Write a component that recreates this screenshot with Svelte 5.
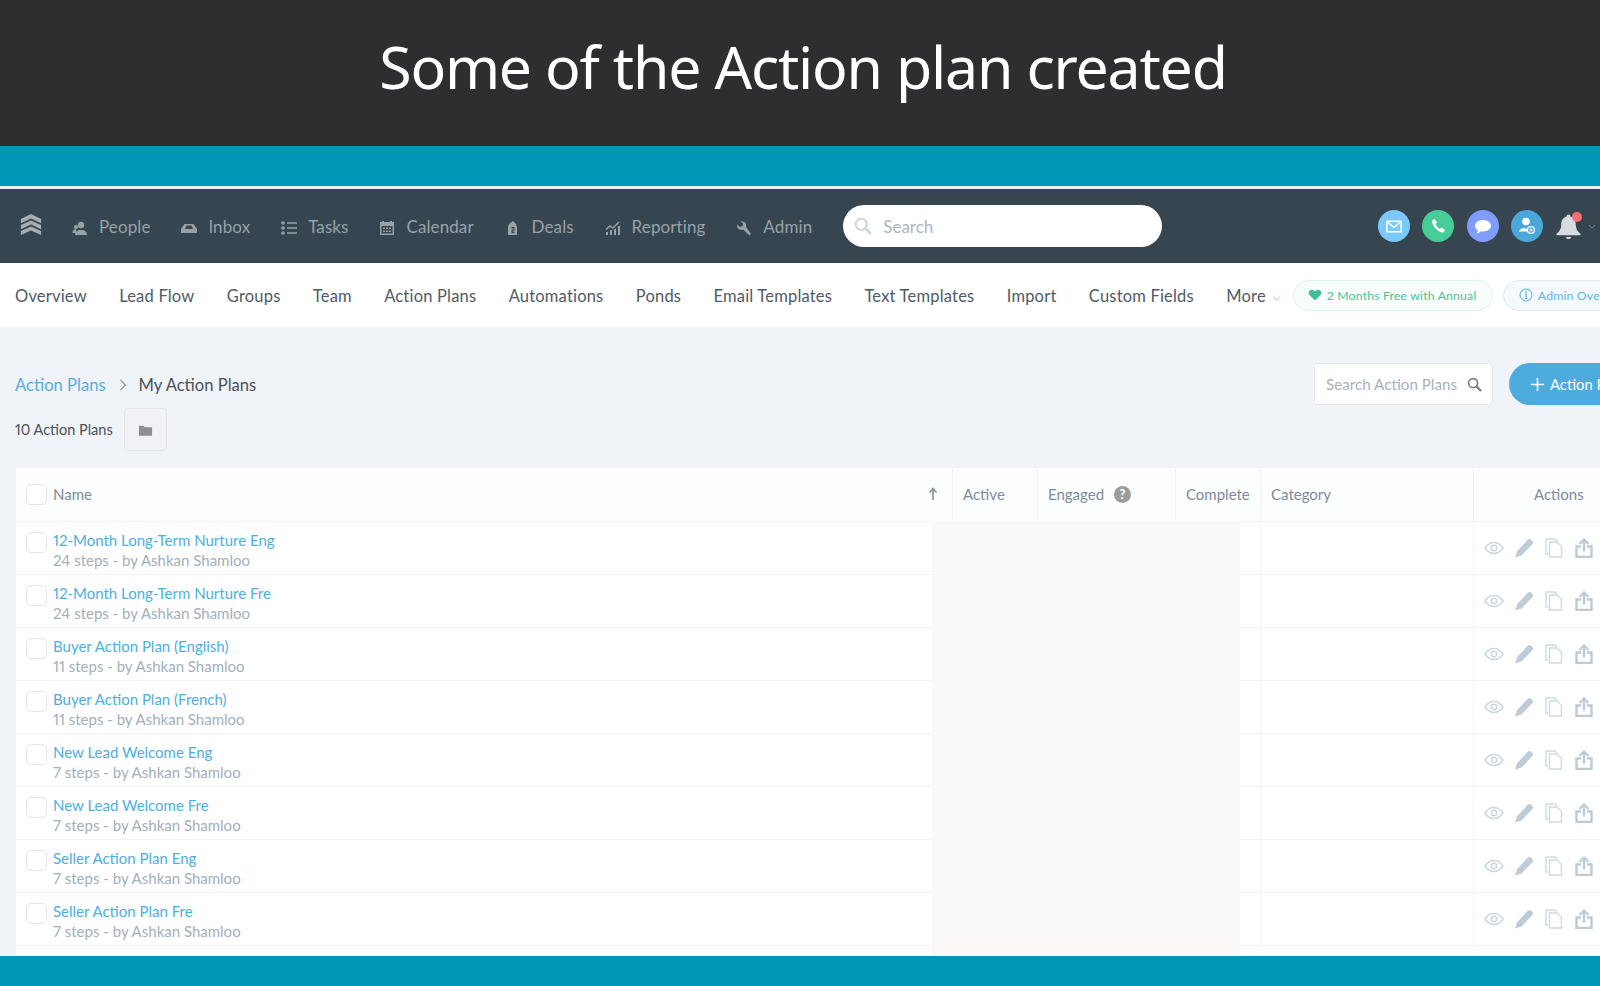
<script>
  const navItems = ['People','Inbox','Tasks','Calendar','Deals','Reporting','Admin'];
  const subItems = ['Overview','Lead Flow','Groups','Team','Action Plans','Automations','Ponds','Email Templates','Text Templates','Import','Custom Fields'];
  const rows = [
    ['12-Month Long-Term Nurture Eng','24 steps - by Ashkan Shamloo'],
    ['12-Month Long-Term Nurture Fre','24 steps - by Ashkan Shamloo'],
    ['Buyer Action Plan (English)','11 steps - by Ashkan Shamloo'],
    ['Buyer Action Plan (French)','11 steps - by Ashkan Shamloo'],
    ['New Lead Welcome Eng','7 steps - by Ashkan Shamloo'],
    ['New Lead Welcome Fre','7 steps - by Ashkan Shamloo'],
    ['Seller Action Plan Eng','7 steps - by Ashkan Shamloo'],
    ['Seller Action Plan Fre','7 steps - by Ashkan Shamloo']
  ];
</script>

<div class="screen">
  <header class="title"><h1>Some of the Action plan created</h1></header>
  <div class="band"></div>
  <div class="rule"></div>

  <nav class="topnav">
    <svg class="logo" viewBox="0 0 24 24"><path d="M12 0 23 5.500V10L12 5 1 10V5.500Z"/><path d="M12 7 23 12V16.500L12 11.500 1 16.500V12Z"/><path d="M12 13.500 23 18.500V23L12 18 1 23V18.500Z"/></svg>
    <div class="navitems">
      {#each navItems as item}
        <div class="navitem">
          <svg class="navicon" viewBox="0 0 16 16">
            {#if item === 'People'}
              <circle cx="9" cy="5" r="3.200"/><path d="M3 15c0-3 2-5 6-5s6 2 6 5Z"/><circle cx="4" cy="7" r="2"/><path d="M0.500 13c0-2.500 1.500-4 3.500-4v4Z"/>
            {:else if item === 'Inbox'}
              <path d="M3.500 4h9L16 9v4H0V9Zm.5 5h8l-1.500-3.500h-5Z" fill-rule="evenodd"/>
            {:else if item === 'Tasks'}
              <circle cx="2" cy="3" r="1.800"/><circle cx="2" cy="8" r="1.800"/><circle cx="2" cy="13" r="1.800"/><path d="M6 2.200h10v1.600H6ZM6 7.200h10v1.600H6ZM6 12.200h10v1.600H6Z"/>
            {:else if item === 'Calendar'}
              <path d="M1 2h2V1h2v1h6V1h2v1h2v13H1ZM2.500 6v7.500h11V6Zm1.500 1.500h2v1.500H4Zm3 0h2v1.500H7Zm3 0h2v1.500h-2ZM4 10.500h2V12H4Zm3 0h2V12H7Zm3 0h2V12h-2Z" fill-rule="evenodd"/>
            {:else if item === 'Deals'}
              <path d="M8 1l3 3 1 3v8H3V7l1-3ZM6.500 7v1.500h2V9.500h-2V13h3v-1.500h-2V10.500h2V7Z" fill-rule="evenodd"/>
            {:else if item === 'Reporting'}
              <path d="M1 12h2v3H1ZM5 10h2v5H5ZM9 9h2v6H9ZM13 6h2v9h-2Z"/><path d="M1 9.500 5 6l3 2 6-6" fill="none" stroke="currentColor" stroke-width="1.400"/>
            {:else}
              <path d="M15 14 13.500 15.500 7 9.500C5 10.300 2.500 9.500 1.500 7.500 1 6.500 1 5.500 1.200 4.500L4 7l2.500-.8.700-2.500L4.500 1.300C6.500.7 9 1.700 9.800 3.500c.5 1.100.5 2.200.1 3.300Z"/>
            {/if}
          </svg>
          <span>{item}</span>
        </div>
      {/each}
    </div>
    <div class="globalsearch">
      <svg viewBox="0 0 16 16"><circle cx="6.500" cy="6.500" r="5" fill="none" stroke="currentColor" stroke-width="1.800"/><path d="M10.500 10.500 15 15" stroke="currentColor" stroke-width="2.400"/></svg>
      <span>Search</span>
    </div>
    <div class="circles">
      <div class="circle mail">
        <svg viewBox="0 0 18 14"><path d="M1 1h16v12H1Z" fill="none" stroke="#fff" stroke-width="1.700"/><path d="M1.500 2 9 8l7.500-6" fill="none" stroke="#fff" stroke-width="1.500"/></svg>
      </div>
      <div class="circle phone">
        <svg viewBox="0 0 16 16"><path d="M4.500 1 2 2.500C1.500 7 8 15 13.500 14.500L15 12l-3.500-2.500-1.800 1.500C8 10 6 7.500 5.500 6L7 4.500Z" fill="#fff"/></svg>
      </div>
      <div class="circle chat">
        <svg viewBox="0 0 18 15"><path d="M9 1c4.500 0 8 2.500 8 5.800s-3.500 5.700-8 5.700c-.8 0-1.500-.1-2.200-.2C5.500 14 3.500 14.500 2 14.300c1-.7 1.700-1.600 1.900-2.800C2 10.500 1 8.800 1 6.800 1 3.500 4.500 1 9 1Z" fill="#fff"/></svg>
      </div>
      <div class="circle adduser">
        <svg viewBox="0 0 20 20"><circle cx="9" cy="5.500" r="3.800" fill="#fff"/><path d="M2 15.500c0-1.500 2-3 4.500-3.800l2.500 1 2-.7v3.500Z" fill="#fff"/><circle cx="14" cy="14" r="4" fill="#fff"/><circle cx="14" cy="14" r="2.800" fill="#4aa7da"/><path d="M12.500 14h3M14 12.500v3" stroke="#fff" stroke-width="1.100"/></svg>
      </div>
      <div class="bell">
        <svg viewBox="0 0 26 26"><path d="M13 1.500c1.200 0 1.800.8 1.800 1.800 3.700 1 5.200 4 5.200 8 0 4 1.800 6.500 4.500 8.700v1.500h-23V20c2.700-2.200 4.500-4.700 4.500-8.700s1.500-7 5.200-8c0-1 .6-1.800 1.800-1.800Z" fill="#d5dbde"/><path d="M10.500 23h5c0 1.200-1 2-2.500 2s-2.500-.8-2.500-2Z" fill="#d5dbde"/></svg>
        <i class="dot"></i>
      </div>
      <svg class="bellchev" viewBox="0 0 10 6"><path d="M1 1l4 4 4-4" fill="none" stroke="#7f8e97" stroke-width="1.200"/></svg>
    </div>
  </nav>

  <nav class="subnav">
    <div class="subitems">
      {#each subItems as item}<span>{item}</span>{/each}
      <span class="more">More<svg viewBox="0 0 10 6"><path d="M1 1l4 4 4-4" fill="none" stroke="#9aa5ad" stroke-width="1"/></svg></span>
    </div>
    <div class="pill green">
      <svg viewBox="0 0 16 14"><path d="M8 13.500 1.500 7C-.5 4.800 1 1 4.200 1 6 1 7.300 2 8 3.200 8.700 2 10 1 11.800 1 15 1 16.500 4.800 14.500 7Z" fill="#3fc195"/></svg>
      <span>2 Months Free with Annual</span>
    </div>
    <div class="pill blue">
      <svg viewBox="0 0 16 16"><circle cx="8" cy="8" r="6.800" fill="none" stroke="#63b5e3" stroke-width="1.200"/><path d="M8 3.500v1.800M6.800 7h1.500v5M6.500 12h3.200" fill="none" stroke="#63b5e3" stroke-width="1.300"/></svg>
      <span>Admin Overview</span>
    </div>
  </nav>

  <main class="page">
    <div class="toolbar">
      <div class="crumbs">
        <a>Action Plans</a>
        <svg viewBox="0 0 8 12"><path d="M1.500 1 6.500 6l-5 5" fill="none" stroke="#939ca5" stroke-width="1.300"/></svg>
        <span>My Action Plans</span>
      </div>
      <div class="tools">
        <div class="plansearch">
          <span>Search Action Plans</span>
          <svg viewBox="0 0 16 16"><circle cx="6.500" cy="6.500" r="4.800" fill="none" stroke="#7c7f82" stroke-width="1.800"/><path d="M10 10 15 15" stroke="#7c7f82" stroke-width="2.400"/></svg>
        </div>
        <button class="add"><svg viewBox="0 0 14 14"><path d="M7 0v14M0 7h14" stroke="#fff" stroke-width="1.700"/></svg>Action Plan</button>
      </div>
    </div>

    <div class="countrow">
      <span>10 Action Plans</span>
      <div class="folder"><svg viewBox="0 0 16 14"><path d="M1 2.500h5l1 1.500h8v9H1Z" fill="#8c8e90"/></svg></div>
    </div>

    <div class="table">
      <div class="grid head">
        <div class="namecell">
          <i class="check"></i><span>Name</span>
          <svg class="sort" viewBox="0 0 10 14"><path d="M5 13V2M1.500 5.500 5 1.500l3.500 4" fill="none" stroke="#8e979f" stroke-width="1.700"/></svg>
        </div>
        <div>Active</div>
        <div class="engaged">Engaged <svg viewBox="0 0 16 16"><circle cx="8" cy="8" r="8" fill="#9a9c9e"/><text x="8" y="12.500" text-anchor="middle" font-size="12" font-weight="700" fill="#fff" font-family="Lato, sans-serif">?</text></svg></div>
        <div>Complete</div>
        <div>Category</div>
        <div class="actionshead">Actions</div>
      </div>

      {#each rows as row}
        <div class="grid row">
          <div class="namecell">
            <i class="check rowcheck"></i>
            <div class="rowtext"><a>{row[0]}</a><span>{row[1]}</span></div>
          </div>
          <div></div><div></div><div></div><div></div>
          <div class="actions">
            <svg viewBox="0 0 20 14"><path d="M1 7c2.500-3.700 5.500-5.500 9-5.500S16.500 3.300 19 7c-2.500 3.700-5.500 5.500-9 5.500S3.500 10.700 1 7Z" fill="none" stroke="#cbd7df" stroke-width="1.500"/><circle cx="10" cy="7" r="2.700" fill="none" stroke="#cbd7df" stroke-width="1.500"/></svg>
            <svg viewBox="0 0 20 20"><path d="M14 1.500c1-.8 2.200-.7 3.200.2l1.200 1.200c.9 1 .9 2.200.1 3.100L7.500 17.500 1 19.500l2.200-6.500Z" fill="#bdccd7"/></svg>
            <svg viewBox="0 0 18 20"><path d="M3 16H1V1h9l2 2" fill="none" stroke="#cfdae2" stroke-width="1.400"/><path d="M4.500 4H12l4.500 4.500V19h-12Z" fill="none" stroke="#cfdae2" stroke-width="1.400"/></svg>
            <svg viewBox="0 0 18 20"><path d="M9 1.500v12" stroke="#bccbd6" stroke-width="2.400"/><path d="M4.500 6 9 1.500 13.500 6" fill="none" stroke="#bccbd6" stroke-width="2.200"/><path d="M6 8.500H1.500v10.500h15V8.500H12" fill="none" stroke="#bccbd6" stroke-width="2.400"/></svg>
          </div>
        </div>
      {/each}

      <div class="redaction"></div>
    </div>
  </main>

  <div class="foot"></div>
</div>

<style>
  :global(body) { margin: 0; background: #f0f3f8; }
  .screen {
    width: 1600px; height: 986px; overflow: hidden;
    display: flex; flex-direction: column;
    font-family: "Lato", "Open Sans", sans-serif; color: #4f5b66;
    font-variant-numeric: proportional-nums;
  }
  .title {
    height: 146px; flex: none; background: #2e2e30;
    display: flex; justify-content: center; align-items: flex-start; padding-left: 6px;
  }
  h1 {
    margin: 25px 0 0; color: #fff; font-family: "Noto Sans", sans-serif;
    font-weight: 400; font-size: 59px; line-height: 82px; letter-spacing: -1.200px;
    white-space: nowrap;
  }
  .band { height: 40px; flex: none; background: #0097b5; }
  .rule { height: 3px; flex: none; background: #e9eeee; }

  .topnav {
    height: 74px; flex: none; background: #36454f;
    display: flex; align-items: center; padding-left: 20px; position: relative;
    color: #98a2a8;
  }
  .logo { width: 22px; height: 22px; fill: #a5adb2; flex: none; margin-bottom: 2px; }
  .navitems { display: flex; gap: 30.900px; margin-left: 30px; align-items: center; }
  .navitem { display: flex; align-items: center; gap: 11px; font-size: 17px; letter-spacing: .1px; }
  .navicon { width: 16px; height: 16px; fill: #98a2a8; color: #98a2a8; flex: none; margin-top: 3px; }
  .globalsearch {
    margin-left: 31px; width: 319px; height: 42px; box-sizing: border-box; flex: none;
    background: #fff; border-radius: 21px; padding-left: 11px;
    display: flex; align-items: center; gap: 11px; color: #aab6c2; font-size: 17px;
  }
  .globalsearch svg { width: 18px; height: 18px; color: #d0d6da; }
  .circles { display: flex; align-items: center; position: absolute; left: 1378px; top: 21px; }
  .circle { width: 32px; height: 32px; border-radius: 50%; display: flex; align-items: center; justify-content: center; margin-right: 12px; }
  .mail { background: #79c9fb; }
  .mail svg { width: 16px; height: 13px; }
  .phone { background: #49cd98; margin-right: 13px; }
  .phone svg { width: 16px; height: 16px; }
  .chat { background: #7f9cff; }
  .chat svg { width: 18px; height: 15px; }
  .adduser { background: #4aa7da; }
  .adduser svg { width: 20px; height: 20px; }
  .bell { position: relative; width: 27px; height: 27px; }
  .bell svg { width: 27px; height: 27px; display: block; }
  .dot { position: absolute; right: 0; top: -1px; width: 10px; height: 10px; border-radius: 50%; background: #fb6f74; }
  .bellchev { width: 8px; height: 5px; margin-left: 6px; }

  .subnav {
    height: 64px; flex: none; background: #fff; box-sizing: border-box;
    display: flex; align-items: center; padding-left: 15px; overflow: hidden; white-space: nowrap;
  }
  .subitems { display: flex; gap: 32.300px; font-size: 16.500px; align-items: center; flex: none; letter-spacing: .2px; margin-top: 2px; }
  .more { display: inline-flex; align-items: center; gap: 6px; }
  .more svg { width: 9px; height: 5px; margin-top: 4px; }
  .pill {
    height: 31px; box-sizing: border-box; border-radius: 16px; flex: none;
    display: flex; align-items: center; font-size: 12.300px; letter-spacing: .15px;
  }
  .green { margin-left: 12px; width: 200px; background: #f7fdfb; border: 1px solid #dbf3ec; color: #4ec397; padding-left: 14px; gap: 5px; }
  .green svg { width: 14px; height: 12px; }
  .blue { margin-left: 10px; width: 180px; background: #f3f9fd; border: 1px solid #d8ebf7; color: #5fb6e6; padding-left: 15px; gap: 5px; }
  .blue svg { width: 14px; height: 14px; }

  .page { flex: 1; min-height: 0; background: #f0f3f8; display: flex; flex-direction: column; padding-left: 15px; overflow: hidden; }
  .toolbar { display: flex; justify-content: space-between; align-items: center; margin-top: 36px; height: 42px; flex: none; }
  .crumbs { display: flex; align-items: center; font-size: 16.600px; color: #4a5258; margin-top: 2px; }
  .crumbs a { color: #55afe1; }
  .crumbs svg { width: 8px; height: 12px; margin: 0 12px 0 13px; }
  .tools { display: flex; align-items: center; gap: 16px; width: 286px; flex: none; overflow: hidden; }
  .plansearch {
    width: 179px; height: 42px; box-sizing: border-box; flex: none; background: #fff;
    border: 1px solid #e2e6eb; border-radius: 4px; padding: 0 10px 0 11px;
    display: flex; align-items: center; justify-content: space-between; color: #a7b2bd; font-size: 15.200px;
  }
  .plansearch svg { width: 15px; height: 15px; }
  .add {
    width: 160px; height: 42px; flex: none; border: 0; border-radius: 21px; background: #4dabdd;
    color: #fff; font: 14.800px "Lato", sans-serif; display: flex; align-items: center; gap: 6px; padding: 0 0 0 22px;
  }
  .add svg { width: 13px; height: 13px; }
  .countrow { display: flex; align-items: center; gap: 11px; height: 43px; flex: none; margin-top: 3px; font-size: 14.500px; color: #4a5258; }
  .folder {
    width: 43px; height: 43px; box-sizing: border-box; background: #f0f2f5; border: 1px solid #e2e5e9; border-radius: 4px;
    display: flex; align-items: center; justify-content: center;
  }
  .folder svg { width: 15px; height: 14px; }

  .table { margin-top: 16px; background: #fff; width: 1640px; flex: 1; position: relative; border-top: 1px solid #eef1f5; border-left: 1px solid #eef1f5; border-radius: 3px 0 0 0; }
  .grid { display: grid; grid-template-columns: 936px 85px 138px 85px 213px 167px; }
  .head { height: 54px; padding-bottom: 1px; background: #fcfdfd; border-bottom: 1px solid #eff2f5; color: #7e8c99; font-size: 15px; box-sizing: border-box; }
  .head > div { display: flex; align-items: center; padding-left: 10px; border-left: 1px solid #f1f3f6; box-sizing: border-box; }
  .head > .namecell { padding-left: 10px; border-left: 0; position: relative; }
  .check { width: 21px; height: 21px; flex: none; box-sizing: border-box; background: #fff; border: 1px solid #e1e6ec; border-radius: 5px; }
  .namecell > span { margin-left: 6px; }
  .sort { position: absolute; left: 912px; top: 19px; width: 10px; height: 14px; }
  .engaged { gap: 10px; }
  .engaged svg { width: 17px; height: 17px; }
  .actionshead { padding-left: 60px !important; }
  .row { height: 53px; box-sizing: border-box; border-bottom: 1px solid #f0f2f5; }
  .row > div { border-left: 1px solid #f3f4f8; box-sizing: border-box; }
  .row > .namecell { border-left: 0; display: flex; padding: 10px 0 0 10px; }
  .rowcheck { margin-right: 6px; }
  .rowtext { display: flex; flex-direction: column; font-size: 15px; line-height: 20px; margin-top: -2px; }
  .rowtext a { color: #4dafe0; }
  .rowtext span { color: #a3afbb; }
  .actions { display: flex; align-items: flex-start; padding: 16px 0 0 10px; gap: 10px; }
  .actions svg { width: 20px; height: 20px; flex: none; }
  .redaction { position: absolute; left: 916px; top: 53px; width: 308px; bottom: 0; background: #faf9f7; }

  .foot { height: 30px; flex: none; background: #0097b5; }
</style>
